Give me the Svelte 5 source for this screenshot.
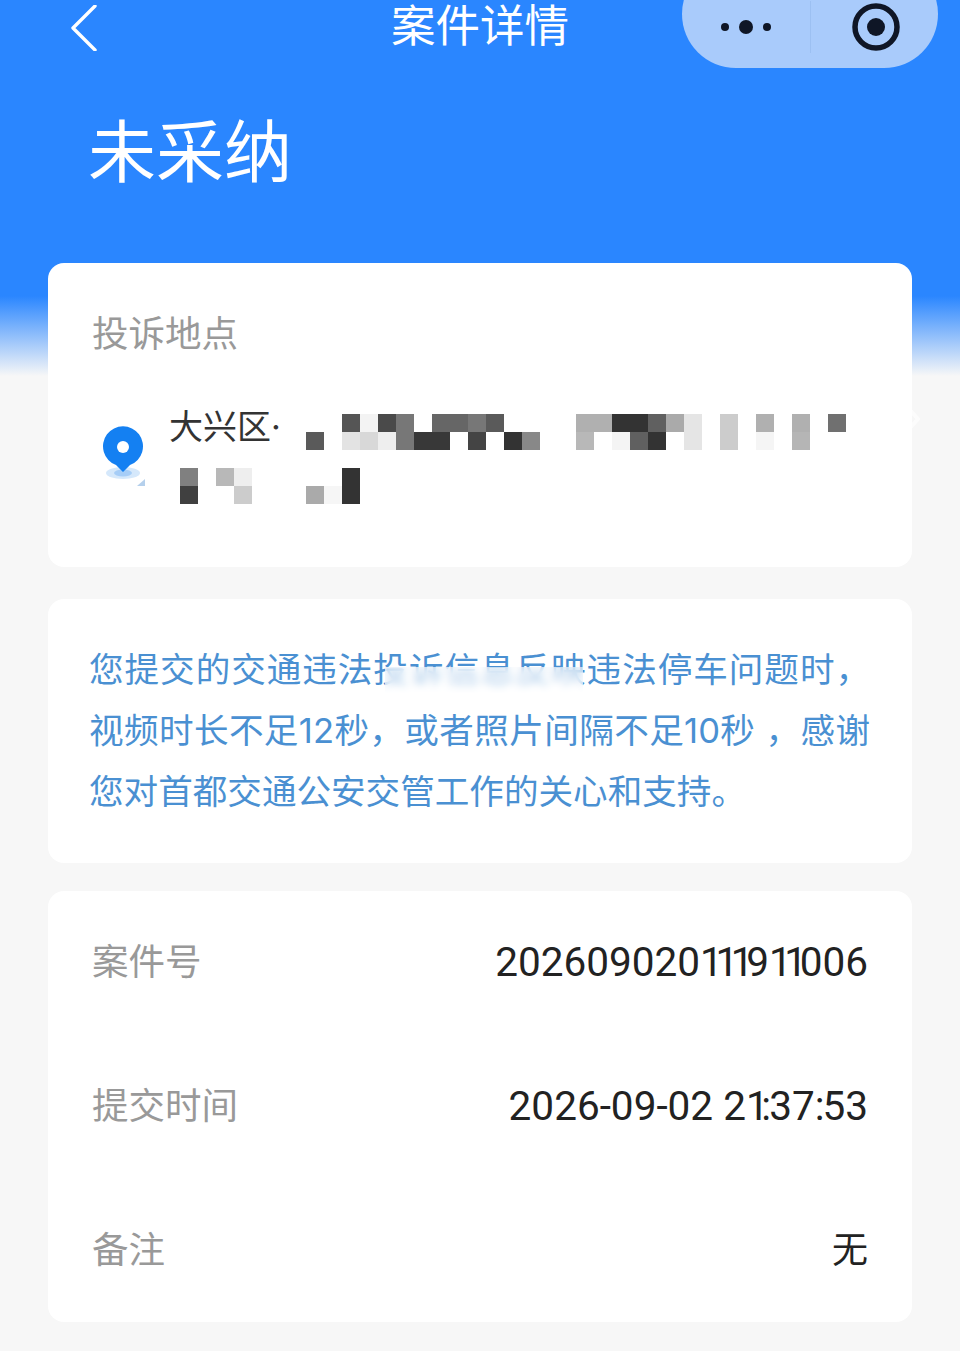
<script lang="ts">
	// mosaic cells: [x in px on the page, row, grey]
	const mosaic: [number, number, string][] = [
		[342, 1, '#555'], [360, 1, '#f3f3f3'], [378, 1, '#4a4a4a'], [396, 1, '#777'], [432, 1, '#666'], [450, 1, '#666'],
		[468, 1, '#777'], [486, 1, '#5a5a5a'], [576, 1, '#b0b0b0'], [594, 1, '#b0b0b0'], [612, 1, '#333'], [630, 1, '#333'],
		[648, 1, '#606060'], [666, 1, '#aaa'], [684, 1, '#e5e5e5'], [720, 1, '#ccc'], [756, 1, '#b0b0b0'], [792, 1, '#b0b0b0'],
		[828, 1, '#707070'],
		[306, 2, '#5a5a5a'], [342, 2, '#e3e3e3'], [360, 2, '#d8d8d8'], [378, 2, '#eee'], [396, 2, '#777'], [414, 2, '#383838'],
		[432, 2, '#383838'], [468, 2, '#444'], [504, 2, '#333'], [522, 2, '#888'], [576, 2, '#b8b8b8'], [612, 2, '#f4f4f4'],
		[630, 2, '#606060'], [648, 2, '#333'], [684, 2, '#e5e5e5'], [720, 2, '#ccc'], [756, 2, '#f5f5f5'], [792, 2, '#b5b5b5'],
		[180, 4, '#808080'], [216, 4, '#b8b8b8'], [234, 4, '#eee'], [342, 4, '#333'],
		[180, 5, '#404040'], [234, 5, '#ccc'], [306, 5, '#aaa'], [324, 5, '#f6f6f6'], [342, 5, '#333']
	];

	const rows = [
		{ label: '案件号', value: '202609020111911006' },
		{ label: '提交时间', value: '2026-09-02 21:37:53' },
		{ label: '备注', value: '无' }
	];
</script>

<div class="page">
	<header class="nav">
		<button class="back" aria-label="返回">
			<svg width="28" height="46" viewBox="0 0 28 46">
				<path d="M25 2 L3 24 L25 46" transform="translate(0 -1)" fill="none" stroke="#fff" stroke-width="3.4" stroke-linecap="round" stroke-linejoin="round" />
			</svg>
		</button>
		<h1 class="nav-title">案件详情</h1>
		<div class="capsule">
			<svg class="dots" width="52" height="14" viewBox="0 0 52 14">
				<circle cx="5" cy="7" r="4" fill="#0f1626" />
				<circle cx="26" cy="7" r="7" fill="#0f1626" />
				<circle cx="47" cy="7" r="4" fill="#0f1626" />
			</svg>
			<span class="divider"></span>
			<svg class="target" width="48" height="48" viewBox="0 0 48 48">
				<circle cx="24" cy="24" r="21" fill="none" stroke="#0f1626" stroke-width="5.5" />
				<circle cx="24" cy="24" r="9" fill="#0f1626" />
			</svg>
		</div>
	</header>

	<div class="status">未采纳</div>

	<main class="cards">
		<section class="card location">
			<div class="card-label">投诉地点</div>
			<div class="address">
				<svg class="pin" width="48" height="64" viewBox="0 0 48 64">
					<ellipse cx="22" cy="50" rx="17" ry="6" fill="#d5e8fb" />
					<ellipse cx="22" cy="50" rx="9" ry="3.5" fill="#a6cdf7" />
					<path d="M22 49 L15 42 A20 20 0 1 1 29 42 Z" fill="#1480f2" />
					<circle cx="22" cy="24" r="6" fill="#fff" />
					<path d="M36 63 L44 56 V63 Z" fill="#b5d0ec" />
				</svg>
				<div class="address-text">大兴区·</div>
			</div>
			<div class="mosaic" aria-hidden="true">
				{#each mosaic as [x, row, grey]}
					<i style="grid-column: {(x - 180) / 18 + 1}; grid-row: {row}; background: {grey}"></i>
				{/each}
			</div>
			<svg class="edge-mark" width="12" height="22" viewBox="0 0 12 22">
				<path d="M1 1 L10 11 L1 21" fill="none" stroke="#fff" stroke-width="4" />
			</svg>
		</section>

		<section class="card notice">
			<p>您提交的交通违法投诉信息反映违法停车问题时，视频时长不足12秒，或者照片间隔不足10秒 ，感谢您对首都交通公安交管工作的关心和支持。</p>
			<span class="smudge"></span>
		</section>

		<section class="card info">
			{#each rows as row}
				<div class="info-row">
					<span class="info-label">{row.label}</span>
					<!-- the 1 and the colon are narrower than in Roboto here -->
					<span class="info-value">{#each row.value.split('') as ch}<span class:one={ch === '1'} class:colon={ch === ':'} class:cjk={ch === '无'}>{ch}</span>{/each}</span>
				</div>
			{/each}
		</section>
	</main>
</div>

<style>
	:global(body) {
		background: #f7f7f7;
	}

	.page {
		height: 1351px;
		overflow: hidden;
		font-family: Inter, "Noto Sans CJK SC", sans-serif;
		background: linear-gradient(#2a86ff 0, #2a86ff 296px, #f7f7f7 376px);
	}

	.nav {
		display: flex;
		justify-content: space-between;
		align-items: flex-start;
		height: 68px;
		padding: 0 22px 0 70px;
		position: relative;
	}

	.back {
		margin-top: 5px;
		padding: 0;
		border: 0;
		background: none;
		line-height: 0;
	}

	.nav-title {
		position: absolute;
		left: 0;
		right: 0;
		top: 0;
		margin: 0;
		font-size: 44.5px;
		line-height: 52px;
		font-weight: 400;
		color: #fff;
		text-align: center;
	}

	.capsule {
		display: flex;
		align-items: center;
		width: 256px;
		height: 108px;
		margin-top: -40px;
		padding-top: 25px;
		box-sizing: border-box;
		border-radius: 54px;
		background: #a9cbfb;
		position: relative;
	}

	.dots {
		margin-left: 38px;
	}

	.divider {
		width: 1px;
		height: 52px;
		margin-left: 38px;
		background: #9cc0f2;
	}

	.target {
		margin-left: 41px;
	}

	.status {
		margin: 36px 0 0 88px;
		font-size: 68px;
		line-height: 96px;
		color: #fff;
	}

	.cards {
		display: flex;
		flex-direction: column;
		margin: 63px 48px 0;
	}

	.card {
		background: #fff;
		border-radius: 16px;
		position: relative;
	}

	.location {
		height: 304px;
		padding: 44px 44px 0;
		box-sizing: border-box;
	}

	.card-label,
	.info-label {
		font-size: 36.5px;
		line-height: 54px;
		color: #999;
	}

	.address {
		display: flex;
		gap: 24px;
		margin-top: 42px;
		margin-left: 9px;
	}

	.pin {
		margin-top: 20px;
		flex: none;
	}

	.address-text {
		margin-left: -4px;
		font-size: 34px;
		line-height: 48px;
		color: #333;
	}

	.mosaic {
		position: absolute;
		left: 132px;
		top: 151px;
		display: grid;
		grid-template-columns: repeat(37, 18px);
		grid-template-rows: repeat(5, 18px);
	}

	.edge-mark {
		position: absolute;
		right: -8px;
		top: 145px;
		opacity: 0.7;
	}

	.notice {
		height: 264px;
		margin-top: 32px;
		padding: 40px 42px 0 41px;
		box-sizing: border-box;
	}

	.notice p {
		margin: 0;
		font-size: 34.6px;
		line-height: 61px;
		color: #4a90d2;
		text-align: justify;
		word-break: break-all;
	}

	.smudge {
		position: absolute;
		left: 337px;
		top: 68px;
		width: 198px;
		height: 26px;
		backdrop-filter: blur(4px);
		background: rgba(255, 255, 255, 0.55);
	}

	.info {
		display: flex;
		flex-direction: column;
		height: 431px;
		margin-top: 28px;
		padding: 0 44px;
		box-sizing: border-box;
	}

	.info-row {
		display: flex;
		justify-content: space-between;
		align-items: center;
		flex: none;
		height: 144px;
		padding-bottom: 2px;
		box-sizing: border-box;
	}

	.info-value {
		font-family: Roboto, "Noto Sans CJK SC", sans-serif;
		font-size: 40.5px;
		line-height: 54px;
		color: #222;
	}

	.one {
		letter-spacing: -7.4px;
	}

	.colon {
		letter-spacing: -2px;
	}

	.cjk {
		font-size: 36px;
	}
</style>
